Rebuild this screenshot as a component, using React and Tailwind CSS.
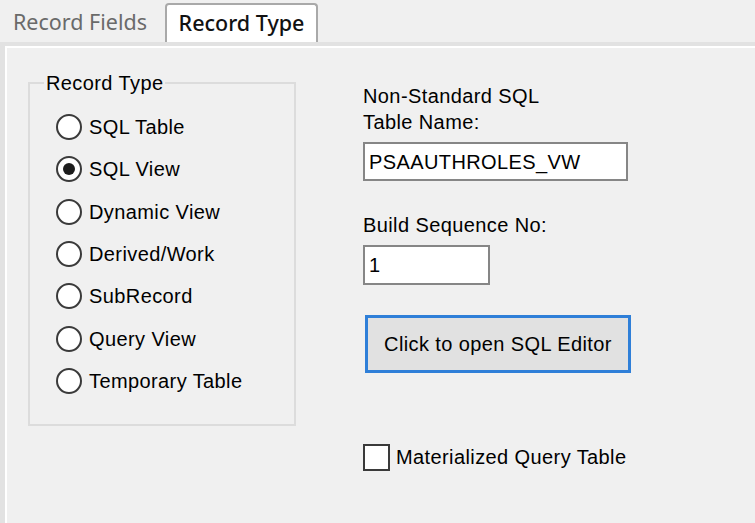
import React from 'react';

const recordTypes = [
  { label: 'SQL Table', checked: false },
  { label: 'SQL View', checked: true },
  { label: 'Dynamic View', checked: false },
  { label: 'Derived/Work', checked: false },
  { label: 'SubRecord', checked: false },
  { label: 'Query View', checked: false },
  { label: 'Temporary Table', checked: false },
];

const Radio = ({ checked }) => (
  <div className="w-[26px] h-[26px] rounded-full border-2 border-[#3a3a3a] bg-white flex items-center justify-center flex-shrink-0">
    {checked && <div className="w-[12px] h-[12px] rounded-full bg-[#1c1c1c]" />}
  </div>
);

const App = () => {
  return (
    <div className="w-[755px] h-[523px] bg-[#f0f0f0] overflow-hidden flex flex-col font-['Liberation_Sans',Arial,sans-serif] text-[20px] tracking-[0.4px] text-black">
      {/* Tabs */}
      <div className="h-[42px] flex items-end font-['Noto_Sans','Open_Sans',sans-serif] tracking-normal text-[21.5px]">
        <div className="w-[165px] h-[39px] flex items-center pl-[13px] text-[#6a6a6a]">
          Record Fields
        </div>
        <div className="w-[153px] h-[39px] flex items-center justify-center bg-white border-2 border-b-0 border-[#a9a9a9] rounded-t-[4px] text-[#111] font-medium">
          Record Type
        </div>
      </div>

      {/* Panel */}
      <div className="flex-1 border-t-4 border-l-[5px] border-[#e2e2e2]">
        <div className="h-full border-t-2 border-l-2 border-white flex items-start">
          {/* Record Type group */}
          <fieldset className="ml-[21px] mt-[24px] w-[268px] h-[354px] border-2 border-[#dcdcdc]">
            <legend className="ml-[14px] px-[2px] leading-[22px]">Record Type</legend>
            <div className="pt-[12px] pl-[26px]">
              {recordTypes.map(rt => (
                <div key={rt.label} className="h-[42.33px] flex items-center gap-[7px]">
                  <Radio checked={rt.checked} />
                  <span className="leading-[24px]">{rt.label}</span>
                </div>
              ))}
            </div>
          </fieldset>

          {/* Right side */}
          <div className="ml-[67px] mt-[35px] flex flex-col">
            <div className="leading-[26px]">
              Non-Standard SQL
              <br />
              Table Name:
            </div>
            <div className="mt-[7px] w-[265px] h-[39px] bg-white border-2 border-[#868686] flex items-center pl-[4px]">
              PSAAUTHROLES_VW
            </div>

            <div className="mt-[31px] leading-[26px]">Build Sequence No:</div>
            <div className="mt-[7px] w-[127px] h-[40px] bg-white border-2 border-[#868686] flex items-center pl-[4px]">
              1
            </div>

            <button className="mt-[30px] ml-[2px] w-[266px] h-[58px] bg-[#e1e1e1] border-[3px] border-[#2f7fd8] flex items-center justify-center tracking-[0.4px]">
              Click to open SQL Editor
            </button>

            <div className="mt-[71px] flex items-center gap-[6px]">
              <div className="w-[27px] h-[27px] bg-white border-2 border-[#3a3a3a] flex-shrink-0" />
              <span className="leading-[27px]">Materialized Query Table</span>
            </div>
          </div>
        </div>
      </div>
    </div>
  );
};

export default App;
